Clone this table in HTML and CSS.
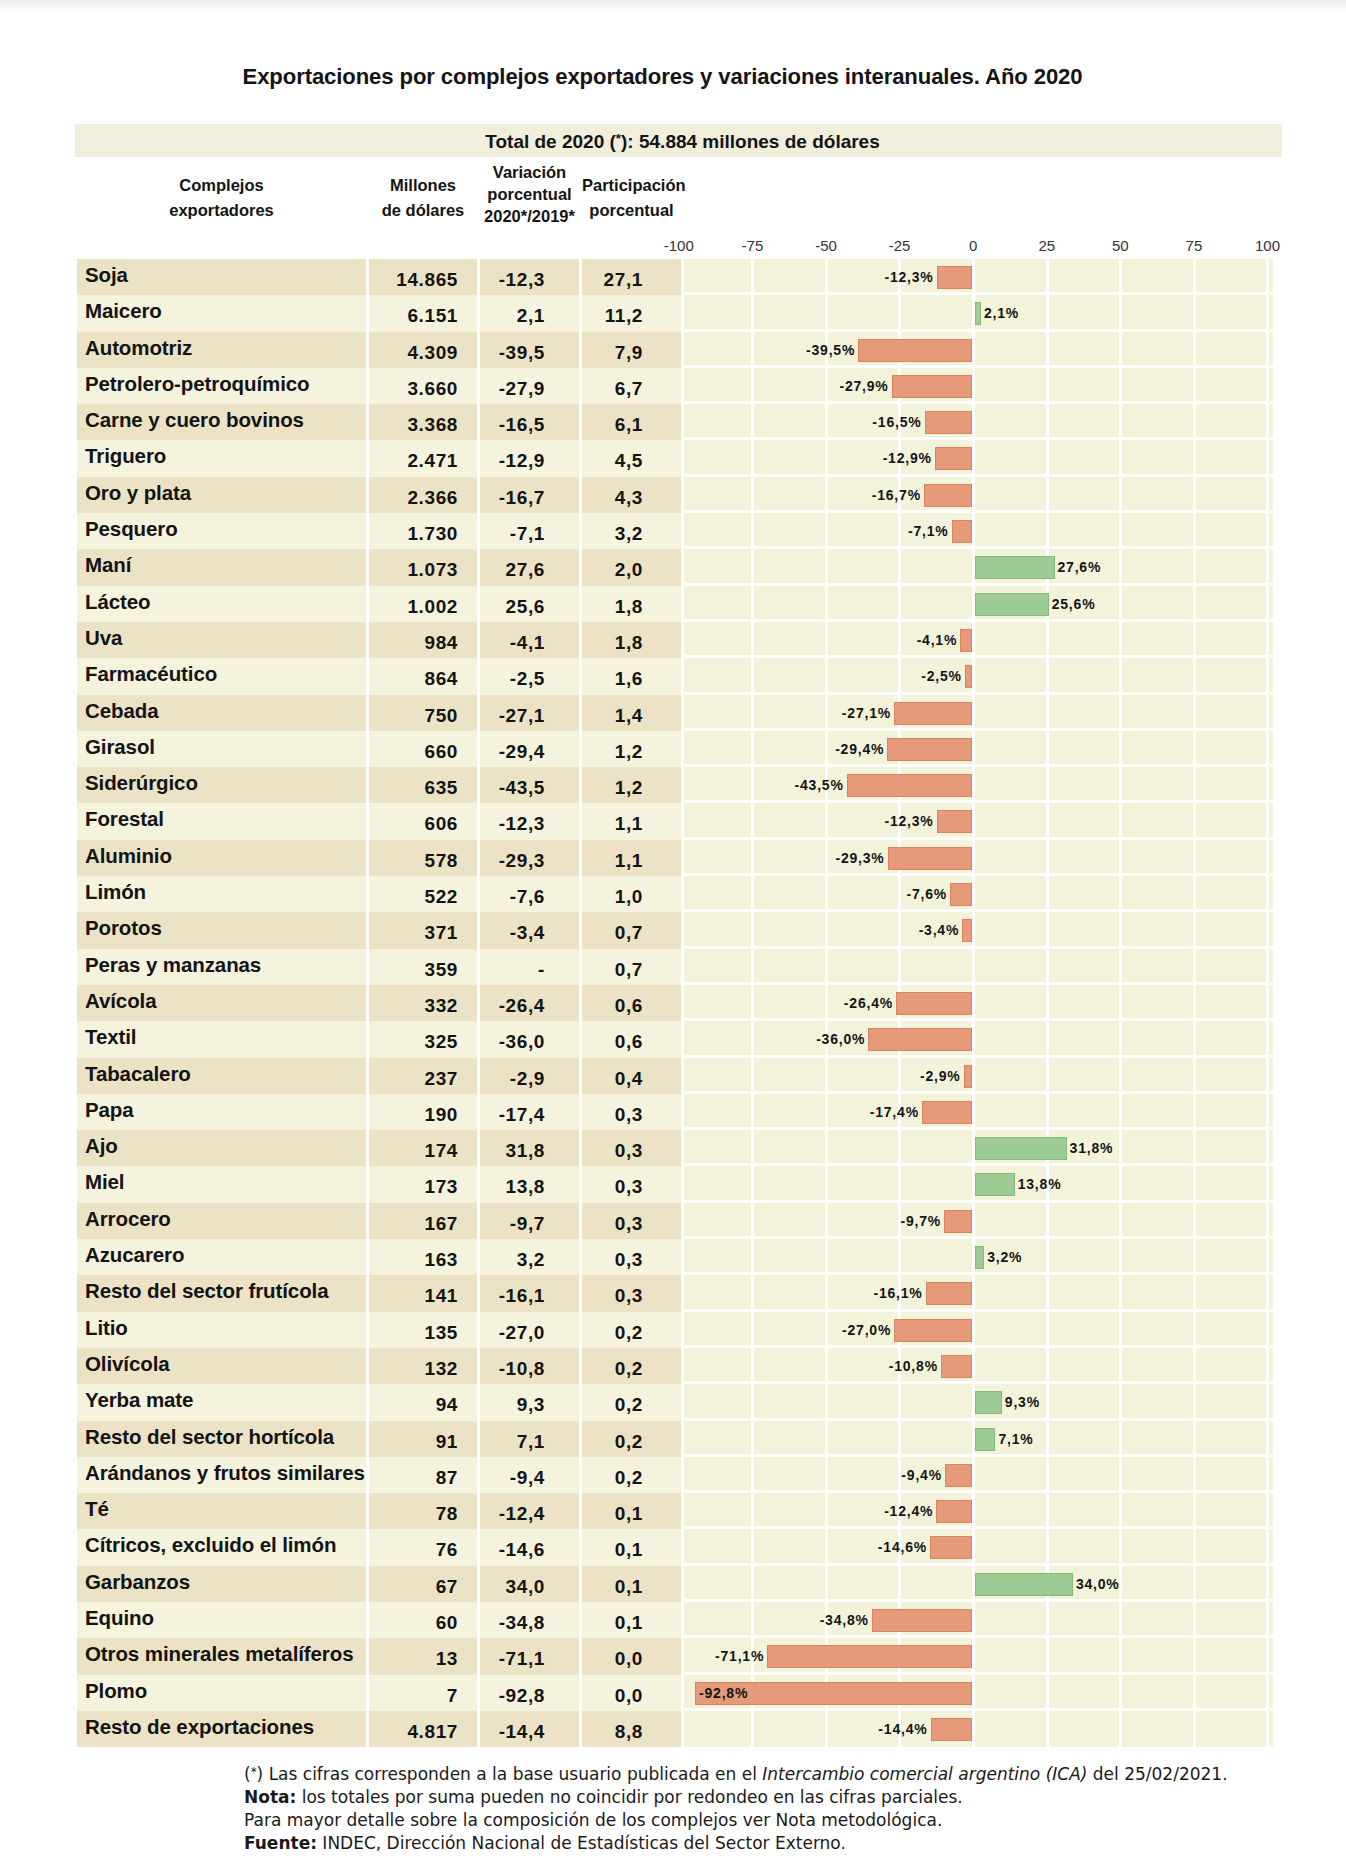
FILE: index.html
```html
<!DOCTYPE html>
<html lang="es">
<head>
<meta charset="utf-8">
<title>Exportaciones por complejos exportadores 2020</title>
<link rel="stylesheet" href="styles.css">
</head>
<body>
<div class="page">
  <h1 class="title">Exportaciones por complejos exportadores y variaciones interanuales. Año 2020</h1>
  <div class="total">Total de 2020 (<span class="ast">*</span>): 54.884 millones de dólares</div>

  <div class="head">
    <div class="h h2">Complejos<br>exportadores</div>
    <div class="h h2">Millones<br>de dólares</div>
    <div class="h h3">Variación<br>porcentual<br>2020*/2019*</div>
    <div class="h h2">Participación<br>porcentual</div>
    <div></div>
  </div>

  <div class="axis">
    <span class="tick">-100</span><span class="tick">-75</span><span class="tick">-50</span><span class="tick">-25</span><span class="tick">0</span><span class="tick">25</span><span class="tick">50</span><span class="tick">75</span><span class="tick">100</span>
  </div>

  <div class="rows">
    <div class="row odd"><div class="name">Soja</div><div class="num mil">14.865</div><div class="num var">-12,3</div><div class="num part">27,1</div><div class="chart"><div class="neg"><span class="lbl">-12,3%</span><span class="bar red" style="width:35.4px"></span></div><div class="pos"></div></div></div>
    <div class="row even"><div class="name">Maicero</div><div class="num mil">6.151</div><div class="num var">2,1</div><div class="num part">11,2</div><div class="chart"><div class="neg"></div><div class="pos"><span class="bar green" style="width:6px"></span><span class="lbl">2,1%</span></div></div></div>
    <div class="row odd"><div class="name">Automotriz</div><div class="num mil">4.309</div><div class="num var">-39,5</div><div class="num part">7,9</div><div class="chart"><div class="neg"><span class="lbl">-39,5%</span><span class="bar red" style="width:113.8px"></span></div><div class="pos"></div></div></div>
    <div class="row even"><div class="name">Petrolero-petroquímico</div><div class="num mil">3.660</div><div class="num var">-27,9</div><div class="num part">6,7</div><div class="chart"><div class="neg"><span class="lbl">-27,9%</span><span class="bar red" style="width:80.4px"></span></div><div class="pos"></div></div></div>
    <div class="row odd"><div class="name">Carne y cuero bovinos</div><div class="num mil">3.368</div><div class="num var">-16,5</div><div class="num part">6,1</div><div class="chart"><div class="neg"><span class="lbl">-16,5%</span><span class="bar red" style="width:47.5px"></span></div><div class="pos"></div></div></div>
    <div class="row even"><div class="name">Triguero</div><div class="num mil">2.471</div><div class="num var">-12,9</div><div class="num part">4,5</div><div class="chart"><div class="neg"><span class="lbl">-12,9%</span><span class="bar red" style="width:37.2px"></span></div><div class="pos"></div></div></div>
    <div class="row odd"><div class="name">Oro y plata</div><div class="num mil">2.366</div><div class="num var">-16,7</div><div class="num part">4,3</div><div class="chart"><div class="neg"><span class="lbl">-16,7%</span><span class="bar red" style="width:48.1px"></span></div><div class="pos"></div></div></div>
    <div class="row even"><div class="name">Pesquero</div><div class="num mil">1.730</div><div class="num var">-7,1</div><div class="num part">3,2</div><div class="chart"><div class="neg"><span class="lbl">-7,1%</span><span class="bar red" style="width:20.4px"></span></div><div class="pos"></div></div></div>
    <div class="row odd"><div class="name">Maní</div><div class="num mil">1.073</div><div class="num var">27,6</div><div class="num part">2,0</div><div class="chart"><div class="neg"></div><div class="pos"><span class="bar green" style="width:79.5px"></span><span class="lbl">27,6%</span></div></div></div>
    <div class="row even"><div class="name">Lácteo</div><div class="num mil">1.002</div><div class="num var">25,6</div><div class="num part">1,8</div><div class="chart"><div class="neg"></div><div class="pos"><span class="bar green" style="width:73.7px"></span><span class="lbl">25,6%</span></div></div></div>
    <div class="row odd"><div class="name">Uva</div><div class="num mil">984</div><div class="num var">-4,1</div><div class="num part">1,8</div><div class="chart"><div class="neg"><span class="lbl">-4,1%</span><span class="bar red" style="width:11.8px"></span></div><div class="pos"></div></div></div>
    <div class="row even"><div class="name">Farmacéutico</div><div class="num mil">864</div><div class="num var">-2,5</div><div class="num part">1,6</div><div class="chart"><div class="neg"><span class="lbl">-2,5%</span><span class="bar red" style="width:7.2px"></span></div><div class="pos"></div></div></div>
    <div class="row odd"><div class="name">Cebada</div><div class="num mil">750</div><div class="num var">-27,1</div><div class="num part">1,4</div><div class="chart"><div class="neg"><span class="lbl">-27,1%</span><span class="bar red" style="width:78px"></span></div><div class="pos"></div></div></div>
    <div class="row even"><div class="name">Girasol</div><div class="num mil">660</div><div class="num var">-29,4</div><div class="num part">1,2</div><div class="chart"><div class="neg"><span class="lbl">-29,4%</span><span class="bar red" style="width:84.7px"></span></div><div class="pos"></div></div></div>
    <div class="row odd"><div class="name">Siderúrgico</div><div class="num mil">635</div><div class="num var">-43,5</div><div class="num part">1,2</div><div class="chart"><div class="neg"><span class="lbl">-43,5%</span><span class="bar red" style="width:125.3px"></span></div><div class="pos"></div></div></div>
    <div class="row even"><div class="name">Forestal</div><div class="num mil">606</div><div class="num var">-12,3</div><div class="num part">1,1</div><div class="chart"><div class="neg"><span class="lbl">-12,3%</span><span class="bar red" style="width:35.4px"></span></div><div class="pos"></div></div></div>
    <div class="row odd"><div class="name">Aluminio</div><div class="num mil">578</div><div class="num var">-29,3</div><div class="num part">1,1</div><div class="chart"><div class="neg"><span class="lbl">-29,3%</span><span class="bar red" style="width:84.4px"></span></div><div class="pos"></div></div></div>
    <div class="row even"><div class="name">Limón</div><div class="num mil">522</div><div class="num var">-7,6</div><div class="num part">1,0</div><div class="chart"><div class="neg"><span class="lbl">-7,6%</span><span class="bar red" style="width:21.9px"></span></div><div class="pos"></div></div></div>
    <div class="row odd"><div class="name">Porotos</div><div class="num mil">371</div><div class="num var">-3,4</div><div class="num part">0,7</div><div class="chart"><div class="neg"><span class="lbl">-3,4%</span><span class="bar red" style="width:9.8px"></span></div><div class="pos"></div></div></div>
    <div class="row even"><div class="name">Peras y manzanas</div><div class="num mil">359</div><div class="num var">-</div><div class="num part">0,7</div><div class="chart"><div class="neg"></div><div class="pos"></div></div></div>
    <div class="row odd"><div class="name">Avícola</div><div class="num mil">332</div><div class="num var">-26,4</div><div class="num part">0,6</div><div class="chart"><div class="neg"><span class="lbl">-26,4%</span><span class="bar red" style="width:76px"></span></div><div class="pos"></div></div></div>
    <div class="row even"><div class="name">Textil</div><div class="num mil">325</div><div class="num var">-36,0</div><div class="num part">0,6</div><div class="chart"><div class="neg"><span class="lbl">-36,0%</span><span class="bar red" style="width:103.7px"></span></div><div class="pos"></div></div></div>
    <div class="row odd"><div class="name">Tabacalero</div><div class="num mil">237</div><div class="num var">-2,9</div><div class="num part">0,4</div><div class="chart"><div class="neg"><span class="lbl">-2,9%</span><span class="bar red" style="width:8.4px"></span></div><div class="pos"></div></div></div>
    <div class="row even"><div class="name">Papa</div><div class="num mil">190</div><div class="num var">-17,4</div><div class="num part">0,3</div><div class="chart"><div class="neg"><span class="lbl">-17,4%</span><span class="bar red" style="width:50.1px"></span></div><div class="pos"></div></div></div>
    <div class="row odd"><div class="name">Ajo</div><div class="num mil">174</div><div class="num var">31,8</div><div class="num part">0,3</div><div class="chart"><div class="neg"></div><div class="pos"><span class="bar green" style="width:91.6px"></span><span class="lbl">31,8%</span></div></div></div>
    <div class="row even"><div class="name">Miel</div><div class="num mil">173</div><div class="num var">13,8</div><div class="num part">0,3</div><div class="chart"><div class="neg"></div><div class="pos"><span class="bar green" style="width:39.7px"></span><span class="lbl">13,8%</span></div></div></div>
    <div class="row odd"><div class="name">Arrocero</div><div class="num mil">167</div><div class="num var">-9,7</div><div class="num part">0,3</div><div class="chart"><div class="neg"><span class="lbl">-9,7%</span><span class="bar red" style="width:27.9px"></span></div><div class="pos"></div></div></div>
    <div class="row even"><div class="name">Azucarero</div><div class="num mil">163</div><div class="num var">3,2</div><div class="num part">0,3</div><div class="chart"><div class="neg"></div><div class="pos"><span class="bar green" style="width:9.2px"></span><span class="lbl">3,2%</span></div></div></div>
    <div class="row odd"><div class="name">Resto del sector frutícola</div><div class="num mil">141</div><div class="num var">-16,1</div><div class="num part">0,3</div><div class="chart"><div class="neg"><span class="lbl">-16,1%</span><span class="bar red" style="width:46.4px"></span></div><div class="pos"></div></div></div>
    <div class="row even"><div class="name">Litio</div><div class="num mil">135</div><div class="num var">-27,0</div><div class="num part">0,2</div><div class="chart"><div class="neg"><span class="lbl">-27,0%</span><span class="bar red" style="width:77.8px"></span></div><div class="pos"></div></div></div>
    <div class="row odd"><div class="name">Olivícola</div><div class="num mil">132</div><div class="num var">-10,8</div><div class="num part">0,2</div><div class="chart"><div class="neg"><span class="lbl">-10,8%</span><span class="bar red" style="width:31.1px"></span></div><div class="pos"></div></div></div>
    <div class="row even"><div class="name">Yerba mate</div><div class="num mil">94</div><div class="num var">9,3</div><div class="num part">0,2</div><div class="chart"><div class="neg"></div><div class="pos"><span class="bar green" style="width:26.8px"></span><span class="lbl">9,3%</span></div></div></div>
    <div class="row odd"><div class="name">Resto del sector hortícola</div><div class="num mil">91</div><div class="num var">7,1</div><div class="num part">0,2</div><div class="chart"><div class="neg"></div><div class="pos"><span class="bar green" style="width:20.4px"></span><span class="lbl">7,1%</span></div></div></div>
    <div class="row even"><div class="name">Arándanos y frutos similares</div><div class="num mil">87</div><div class="num var">-9,4</div><div class="num part">0,2</div><div class="chart"><div class="neg"><span class="lbl">-9,4%</span><span class="bar red" style="width:27.1px"></span></div><div class="pos"></div></div></div>
    <div class="row odd"><div class="name">Té</div><div class="num mil">78</div><div class="num var">-12,4</div><div class="num part">0,1</div><div class="chart"><div class="neg"><span class="lbl">-12,4%</span><span class="bar red" style="width:35.7px"></span></div><div class="pos"></div></div></div>
    <div class="row even"><div class="name">Cítricos, excluido el limón</div><div class="num mil">76</div><div class="num var">-14,6</div><div class="num part">0,1</div><div class="chart"><div class="neg"><span class="lbl">-14,6%</span><span class="bar red" style="width:42px"></span></div><div class="pos"></div></div></div>
    <div class="row odd"><div class="name">Garbanzos</div><div class="num mil">67</div><div class="num var">34,0</div><div class="num part">0,1</div><div class="chart"><div class="neg"></div><div class="pos"><span class="bar green" style="width:97.9px"></span><span class="lbl">34,0%</span></div></div></div>
    <div class="row even"><div class="name">Equino</div><div class="num mil">60</div><div class="num var">-34,8</div><div class="num part">0,1</div><div class="chart"><div class="neg"><span class="lbl">-34,8%</span><span class="bar red" style="width:100.2px"></span></div><div class="pos"></div></div></div>
    <div class="row odd"><div class="name">Otros minerales metalíferos</div><div class="num mil">13</div><div class="num var">-71,1</div><div class="num part">0,0</div><div class="chart"><div class="neg"><span class="lbl">-71,1%</span><span class="bar red" style="width:204.8px"></span></div><div class="pos"></div></div></div>
    <div class="row even"><div class="name">Plomo</div><div class="num mil">7</div><div class="num var">-92,8</div><div class="num part">0,0</div><div class="chart"><div class="neg"><span class="bar red inside" style="width:277px"><span class="lbl">-92,8%</span></span></div><div class="pos"></div></div></div>
    <div class="row odd"><div class="name">Resto de exportaciones</div><div class="num mil">4.817</div><div class="num var">-14,4</div><div class="num part">8,8</div><div class="chart"><div class="neg"><span class="lbl">-14,4%</span><span class="bar red" style="width:41.5px"></span></div><div class="pos"></div></div></div>
  </div>

  <div class="notes">
    <p>(<span class="ast">*</span>) Las cifras corresponden a la base usuario publicada en el <em>Intercambio comercial argentino (ICA)</em> del 25/02/2021.</p>
    <p><b>Nota:</b> los totales por suma pueden no coincidir por redondeo en las cifras parciales.</p>
    <p>Para mayor detalle sobre la composición de los complejos ver Nota metodológica.</p>
    <p><b>Fuente:</b> INDEC, Dirección Nacional de Estadísticas del Sector Externo.</p>
  </div>
</div>
</body>
</html>
```
FILE: styles.css
```css
* { box-sizing: border-box; }

body {
  margin: 0;
  background: linear-gradient(#ebebeb, #ffffff 12px) no-repeat #ffffff;
  font-family: "Liberation Sans", Arial, Helvetica, sans-serif;
  color: #141414;
}

.page {
  width: 1282px;
  padding-left: 75px;
  padding-bottom: 20px;
}

.title {
  margin: 0;
  padding-top: 64px;
  padding-right: 32px;
  font-size: 22.1px;
  line-height: 25px;
  font-weight: bold;
  text-align: center;
  letter-spacing: -0.1px;
}

.total {
  margin-top: 35px;
  height: 33px;
  line-height: 30px;
  background: #f1efdc;
  font-size: 19px;
  font-weight: bold;
  text-align: center;
  padding-left: 8px;
}

.ast {
  font-size: 0.7em;
  vertical-align: 0.35em;
}

.head {
  display: grid;
  grid-template-columns: 289px 108px 99px 99px 589px;
  column-gap: 3px;
  margin-left: 2px;
  height: 77px;
}

.h {
  font-size: 16.5px;
  font-weight: bold;
  text-align: center;
  white-space: nowrap;
}

.h2 {
  padding-top: 16px;
  line-height: 25px;
}

.h3 {
  padding-top: 4px;
  line-height: 22px;
}

.axis {
  display: flex;
  margin-left: 567px;
  height: 25px;
  padding-top: 1px;
}

.tick {
  width: 73.6px;
  flex: none;
  text-align: center;
  font-size: 15px;
  line-height: 22px;
  color: #333333;
}

.rows {
  margin-left: 2px;
}

.row {
  display: grid;
  grid-template-columns: 289px 108px 99px 99px 589px;
  column-gap: 3px;
  height: 36.3px;
}

.row.odd .name,
.row.odd .num { background: #ece3c6; }

.row.even .name,
.row.even .num { background: #f5f3dd; }

.name {
  padding-left: 8px;
  padding-top: 4px;
  font-size: 20.5px;
  line-height: 24px;
  font-weight: bold;
  white-space: nowrap;
  letter-spacing: -0.1px;
}

.num {
  text-align: right;
  padding-top: 10px;
  font-size: 19px;
  line-height: 22px;
  font-weight: bold;
  letter-spacing: 0.6px;
}

.mil { padding-right: 19px; }
.var { padding-right: 34px; }
.part { padding-right: 38px; }

.chart {
  display: grid;
  grid-template-columns: 288px 1fr;
  column-gap: 3px;
  border-bottom: 3px solid #ffffff;
  background: repeating-linear-gradient(to right,
    #f3f3dc 0, #f3f3dc 67.2px,
    #ffffff 67.2px, #ffffff 70.2px,
    #f3f3dc 70.2px, #f3f3dc 73.6px);
}

.row:last-child .chart { border-bottom: 0; }

.neg,
.pos {
  display: flex;
  align-items: flex-start;
  padding-top: 7px;
}

.neg { justify-content: flex-end; }
.pos { justify-content: flex-start; }

.bar {
  display: block;
  flex: none;
  height: 23px;
}

.bar.red {
  background: #e69a7a;
  border: 1px solid #d8845f;
}

.bar.green {
  background: #9ccb93;
  border: 1px solid #84bb7b;
}

.lbl {
  font-size: 14px;
  line-height: 23px;
  font-weight: bold;
  letter-spacing: 0.8px;
  white-space: nowrap;
}

.neg .lbl { margin-right: 3px; }
.pos .lbl { margin-left: 3px; }

.bar.inside {
  display: flex;
  align-items: center;
  padding-left: 3px;
}

.bar.inside .lbl {
  margin: 0;
  line-height: 21px;
}

.notes {
  margin-top: 14px;
  padding-left: 169px;
  font-family: "DejaVu Sans", Verdana, sans-serif;
  font-size: 17px;
  line-height: 23px;
  color: #1a1a1a;
}

.notes p {
  margin: 0;
  white-space: nowrap;
}
```
